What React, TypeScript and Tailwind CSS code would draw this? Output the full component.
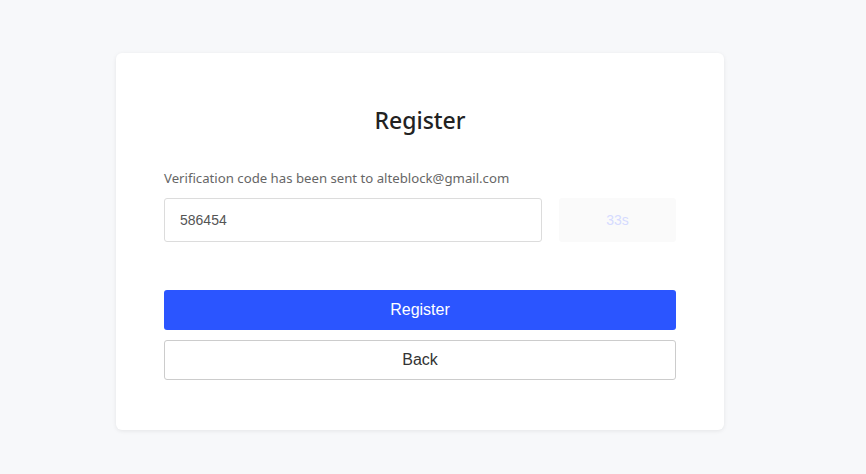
export default function App() {
  return (
    <div className="min-h-[474px] w-full bg-[#f7f8fa] pt-[53px] font-['Liberation_Sans',Arial,sans-serif]">
      <div className="ml-[116px] w-[608px] h-[377px] rounded-md bg-white shadow-[0_1px_4px_rgba(0,0,0,0.08)] px-12 pt-[51px]">
        <h1 className="text-center text-[23px] leading-[32px] font-medium text-[#222] font-['Noto_Sans',sans-serif]">
          Register
        </h1>
        <p className="mt-[33px] text-[13.2px] leading-[18px] text-[#666] font-['Noto_Sans',sans-serif]">
          Verification code has been sent to alteblock@gmail.com
        </p>
        <div className="mt-[11px] flex gap-[17px]">
          <input
            type="text"
            defaultValue="586454"
            className="w-[378px] h-[44px] rounded-[3px] border border-[#dcdcdc] px-[15px] text-[14px] text-[#555] outline-none"
          />
          <button
            type="button"
            disabled
            className="flex-1 h-[44px] rounded-[3px] bg-[#fafafa] text-[14px] text-[#d5dbff]"
          >
            33s
          </button>
        </div>
        <button
          type="button"
          className="mt-[48px] block w-full h-[40px] rounded-[3px] bg-[#2b55ff] text-[16px] text-white"
        >
          Register
        </button>
        <button
          type="button"
          className="mt-[10px] block w-full h-[40px] rounded-[3px] border border-[#cccccc] bg-white text-[16px] text-[#333]"
        >
          Back
        </button>
      </div>
    </div>
  );
}
